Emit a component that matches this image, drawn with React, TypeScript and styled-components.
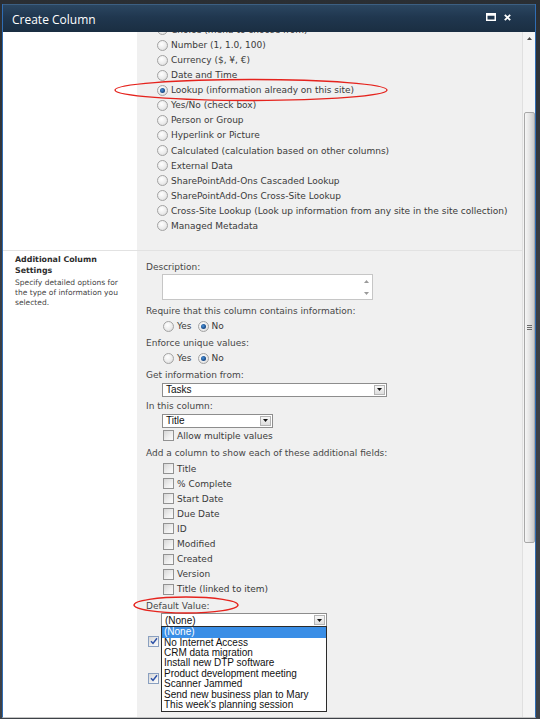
import React from 'react';
import styled, {createGlobalStyle, css} from 'styled-components';

const columnTypes = [
    'Choice (menu to choose from)',
    'Number (1, 1.0, 100)',
    'Currency ($, ¥, €)',
    'Date and Time',
    'Lookup (information already on this site)',
    'Yes/No (check box)',
    'Person or Group',
    'Hyperlink or Picture',
    'Calculated (calculation based on other columns)',
    'External Data',
    'SharePointAdd-Ons Cascaded Lookup',
    'SharePointAdd-Ons Cross-Site Lookup',
    'Cross-Site Lookup (Look up information from any site in the site collection)',
    'Managed Metadata',
];

const extraFields = ['Title', '% Complete', 'Start Date', 'Due Date', 'ID', 'Modified', 'Created', 'Version', 'Title (linked to item)'];

const defaultOptions = [
    '(None)',
    'No Internet Access',
    'CRM data migration',
    'Install new DTP software',
    'Product development meeting',
    'Scanner Jammed',
    'Send new business plan to Mary',
    "This week's planning session",
];

const GlobalStyle = createGlobalStyle`
  html, body {
    margin: 0;
    padding: 0;
    background: #35393e;
  }
  body {
    width: 540px;
    height: 719px;
    overflow: hidden;
  }
`;

const Radio = ({on}: { on?: boolean }) => <RadioDot $on={on}/>;

const CheckBox = ({on}: { on?: boolean }) => (
    <Box $on={on}>
        {on && (
            <svg width="8" height="8" viewBox="0 0 8 8">
                <path d="M1 4.2 L3 6.4 L7 1.2" fill="none" stroke="#2d52a8" strokeWidth="1.5"/>
            </svg>
        )}
    </Box>
);

const Select = ({value, width, children}: { value: string; width: number; children?: React.ReactNode }) => (
    <SelectBox style={{width}}>
        <SelectValue>{value}</SelectValue>
        <DropBtn>
            <svg width="5" height="3" viewBox="0 0 5 3">
                <path d="M0 0 H5 L2.5 3 Z" fill="#111"/>
            </svg>
        </DropBtn>
        {children}
    </SelectBox>
);

const App = () => {
    return (
        <Frame>
            <GlobalStyle/>
            <Window>
                <TitleBar>
                    <Title>Create Column</Title>
                    <TitleButtons>
                        <svg width="10" height="8" viewBox="0 0 10 8">
                            <rect x="0.75" y="0.75" width="8.5" height="6.5" fill="none" stroke="#fff" strokeWidth="1.5"/>
                            <rect x="0.75" y="0.75" width="8.5" height="2" fill="#fff"/>
                        </svg>
                        <svg width="7" height="7" viewBox="0 0 7 7">
                            <path d="M0.8 0.8 L6.2 6.2 M6.2 0.8 L0.8 6.2" stroke="#fff" strokeWidth="1.8"/>
                        </svg>
                    </TitleButtons>
                </TitleBar>
                <Body>
                    <Content>
                        <Scrolled>
                            <Section>
                                <SideCol/>
                                <TypeList>
                                    {columnTypes.map((t) => (
                                        <TypeRow key={t}>
                                            <Radio on={t.startsWith('Lookup')}/>
                                            <span>{t}</span>
                                        </TypeRow>
                                    ))}
                                </TypeList>
                            </Section>
                            <Section $grow $ruled>
                                <SideCol>
                                    <SideHeading>Additional Column Settings</SideHeading>
                                    <SideText>Specify detailed options for the type of information you selected.</SideText>
                                </SideCol>
                                <Fields>
                                    <Label>Description:</Label>
                                    <TextBox>
                                        <TextScroll>
                                            <svg width="5" height="3" viewBox="0 0 5 3"><path d="M0 3 H5 L2.5 0 Z" fill="#9a9a9a"/></svg>
                                            <svg width="5" height="3" viewBox="0 0 5 3"><path d="M0 0 H5 L2.5 3 Z" fill="#9a9a9a"/></svg>
                                        </TextScroll>
                                    </TextBox>

                                    <Group>
                                        <Label>Require that this column contains information:</Label>
                                        <ChoiceRow>
                                            <Radio/><Option>Yes</Option>
                                            <Radio on/><Option>No</Option>
                                        </ChoiceRow>
                                    </Group>

                                    <Group>
                                        <Label>Enforce unique values:</Label>
                                        <ChoiceRow>
                                            <Radio/><Option>Yes</Option>
                                            <Radio on/><Option>No</Option>
                                        </ChoiceRow>
                                    </Group>

                                    <Group>
                                        <Label>Get information from:</Label>
                                        <SelectRow>
                                            <Select value="Tasks" width={225}/>
                                        </SelectRow>
                                    </Group>

                                    <Group $gap={3}>
                                        <Label>In this column:</Label>
                                        <SelectRow>
                                            <Select value="Title" width={111}/>
                                        </SelectRow>
                                        <CheckRow>
                                            <CheckBox/><Option>Allow multiple values</Option>
                                        </CheckRow>
                                    </Group>

                                    <Group>
                                        <Label>Add a column to show each of these additional fields:</Label>
                                        <CheckList>
                                            {extraFields.map((f) => (
                                                <CheckRow key={f}>
                                                    <CheckBox/><Option>{f}</Option>
                                                </CheckRow>
                                            ))}
                                        </CheckList>
                                    </Group>

                                    <Group>
                                        <Label>Default Value:</Label>
                                        <SelectRow $shift={-1}>
                                            <Select value="(None)" width={166}>
                                                <DropList>
                                                    {defaultOptions.map((o, i) => (
                                                        <DropItem key={o} $active={i === 0}>{o}</DropItem>
                                                    ))}
                                                </DropList>
                                            </Select>
                                        </SelectRow>
                                    </Group>

                                    <HiddenChecks>
                                        <CheckBox on/>
                                        <CheckBox on/>
                                    </HiddenChecks>
                                </Fields>
                            </Section>
                        </Scrolled>
                    </Content>
                    <ScrollTrack>
                        <ScrollArrow>
                            <svg width="5" height="3" viewBox="0 0 5 3"><path d="M0 3 H5 L2.5 0 Z" fill="#4a4a4a"/></svg>
                        </ScrollArrow>
                        <Thumb>
                            <Grip/>
                        </Thumb>
                    </ScrollTrack>
                </Body>
            </Window>
            <Marks width="540" height="719" viewBox="0 0 540 719">
                <ellipse cx="251" cy="90" rx="136" ry="10.5" fill="none" stroke="#e5231d" strokeWidth="1.4"/>
                <ellipse cx="186" cy="605" rx="52" ry="8" fill="none" stroke="#e5231d" strokeWidth="1.4"/>
            </Marks>
        </Frame>
    );
};

export default App;

const Frame = styled.div`
  position: relative;
  width: 540px;
  height: 719px;
  box-sizing: border-box;
  padding: 4px 4px 0 2px;
  background: linear-gradient(to bottom, #2a2e33, #3a3e44 40%, #3d4147);
`

const Window = styled.div`
  height: 713px;
  display: flex;
  flex-direction: column;
  border-left: 1px solid #2f6db4;
  border-right: 1px solid #2f6db4;
  border-bottom: 1px solid #c4c4c4;
  overflow: hidden;
`

const TitleBar = styled.div`
  height: 27px;
  flex: none;
  display: flex;
  align-items: center;
  justify-content: space-between;
  padding: 0 24px 0 9px;
  background: linear-gradient(to bottom, #2b4661 0%, #20374f 45%, #1a2e42 100%);
  border-top: 1px solid #3c5f82;
`

const Title = styled.span`
  font-family: "Open Sans", "DejaVu Sans", sans-serif;
  font-size: 12px;
  color: #ffffff;
  margin-top: 1px;
`

const TitleButtons = styled.div`
  display: flex;
  align-items: center;
  gap: 8px;
  margin-top: -3px;
`

const Body = styled.div`
  flex: 1;
  display: flex;
  min-height: 0;
`

const Content = styled.div`
  flex: 1;
  overflow: hidden;
  display: flex;
  flex-direction: column;
  background: #ffffff;
`

const Scrolled = styled.div`
  flex: 1;
  display: flex;
  flex-direction: column;
  margin-top: -9.6px;
`

const Section = styled.div<{ $grow?: boolean; $ruled?: boolean }>`
  display: flex;
  ${p => p.$grow && css`flex: 1;`}
  ${p => p.$ruled && css`border-top: 1px solid #e2e2e2;`}
`

const SideCol = styled.div`
  width: 134px;
  flex: none;
  box-sizing: border-box;
  padding: 4px 8px 0 12px;
  background: #ffffff;
`

const SideHeading = styled.div`
  font-family: "DejaVu Sans", Verdana, sans-serif;
  font-size: 7.9px;
  font-weight: 700;
  line-height: 10.5px;
  color: #2e2e2e;
  padding-top: 0;
`

const SideText = styled.div`
  font-family: "DejaVu Sans", Verdana, sans-serif;
  font-size: 7.5px;
  line-height: 10px;
  color: #444;
  margin-top: 2px;
`

const TypeList = styled.div`
  flex: 1;
  background: #f0f0f0;
  padding: 0 0 16.5px 20px;
`

const TypeRow = styled.div`
  height: 15.08px;
  display: flex;
  align-items: center;
  gap: 3px;
  font-family: "DejaVu Sans", Verdana, sans-serif;
  font-size: 9px;
  color: #3a3a3a;
  white-space: nowrap;
`

const RadioDot = styled.span<{ $on?: boolean }>`
  position: relative;
  flex: none;
  width: 9px;
  height: 9px;
  border-radius: 50%;
  border: 1px solid #a3a3a3;
  background: radial-gradient(circle at 40% 35%, #ffffff 0%, #ececec 55%, #d2d2d2 100%);
  ${p => p.$on && css`
    &::after {
      content: '';
      position: absolute;
      left: 2px;
      top: 2px;
      width: 5px;
      height: 5px;
      border-radius: 50%;
      background: radial-gradient(circle at 40% 40%, #4d95dc 0%, #1d5291 55%, #0f3366 100%);
    }
  `}
`

const Box = styled.span<{ $on?: boolean }>`
  flex: none;
  width: 9px;
  height: 9px;
  display: flex;
  align-items: center;
  justify-content: center;
  border: 1px solid ${p => (p.$on ? '#8aa0c0' : '#929292')};
  background: linear-gradient(135deg, #d6d6d6 0%, #f0f0f0 60%, #fbfbfb 100%);
`

const Fields = styled.div`
  flex: 1;
  background: #f0f0f0;
  padding: 9px 0 0 9px;
  font-family: "DejaVu Sans", Verdana, sans-serif;
  font-size: 9px;
  color: #474747;
`

const Label = styled.div`
  height: 14px;
  line-height: 14px;
  white-space: nowrap;
`

const TextBox = styled.div`
  position: relative;
  width: 209px;
  height: 24px;
  margin: 0 0 4px 16px;
  border: 1px solid #c6c6c6;
  background: #ffffff;
`

const TextScroll = styled.div`
  position: absolute;
  right: 3px;
  top: 5px;
  bottom: 4px;
  display: flex;
  flex-direction: column;
  justify-content: space-between;
`

const Group = styled.div<{ $gap?: number }>`
  margin-bottom: ${p => p.$gap ?? 2}px;
`

const ChoiceRow = styled.div`
  height: 16px;
  display: flex;
  align-items: center;
  padding-left: 17px;
  color: #3a3a3a;
`

const Option = styled.span`
  margin: 0 6px 0 3px;
  color: #3a3a3a;
  white-space: nowrap;
`

const SelectRow = styled.div<{ $shift?: number }>`
  height: 15px;
  display: flex;
  align-items: center;
  padding-left: ${p => 16 + (p.$shift ?? 0)}px;
`

const SelectBox = styled.div`
  position: relative;
  height: 14px;
  box-sizing: border-box;
  display: flex;
  align-items: center;
  border: 1px solid #8d8d8d;
  background: #ffffff;
`

const SelectValue = styled.span`
  flex: 1;
  padding-left: 3px;
  font-family: "Liberation Sans", Arial, sans-serif;
  font-size: 10px;
  color: #111;
`

const DropBtn = styled.span`
  width: 11px;
  height: 10px;
  margin-right: 1px;
  display: flex;
  align-items: center;
  justify-content: center;
  box-sizing: border-box;
  border: 1px solid #b4b4b4;
  background: linear-gradient(to bottom, #f7f7f7, #dedede);
`

const DropList = styled.div`
  position: absolute;
  top: 100%;
  left: -1px;
  width: 166px;
  box-sizing: border-box;
  border: 1px solid #2b2b2b;
  background: #ffffff;
  padding-bottom: 1px;
  z-index: 2;
`

const DropItem = styled.div<{ $active?: boolean }>`
  height: 10.4px;
  line-height: 10.4px;
  padding-left: 2px;
  font-family: "Liberation Sans", Arial, sans-serif;
  font-size: 10px;
  white-space: nowrap;
  color: ${p => (p.$active ? '#ffffff' : '#111')};
  background: ${p => (p.$active ? '#3a8ee6' : 'transparent')};
`

const CheckRow = styled.div`
  height: 15.08px;
  display: flex;
  align-items: center;
  padding-left: 17px;
`

const CheckList = styled.div`
  padding-top: 1px;
`

const HiddenChecks = styled.div`
  display: flex;
  flex-direction: column;
  gap: 26px;
  padding: 6px 0 0 2px;
`

const ScrollTrack = styled.div`
  width: 12px;
  flex: none;
  display: flex;
  flex-direction: column;
  align-items: center;
  border-left: 1px solid #e0e0e0;
  background: #f4f4f4;
`

const ScrollArrow = styled.div`
  height: 3px;
  margin-top: 5px;
  display: flex;
`

const Thumb = styled.div`
  width: 11px;
  height: 431px;
  margin-top: 72px;
  box-sizing: border-box;
  border: 1px solid #a8a8a8;
  border-radius: 2px;
  background: linear-gradient(to right, #f6f6f6 0%, #e6e6e6 45%, #c8c8c8 100%);
  display: flex;
  align-items: center;
  justify-content: center;
`

const Grip = styled.span`
  width: 5px;
  height: 5px;
  background: repeating-linear-gradient(to bottom, #6a6a6a 0 1px, transparent 1px 2px);
`

const Marks = styled.svg`
  position: absolute;
  left: 0;
  top: 0;
  pointer-events: none;
`
